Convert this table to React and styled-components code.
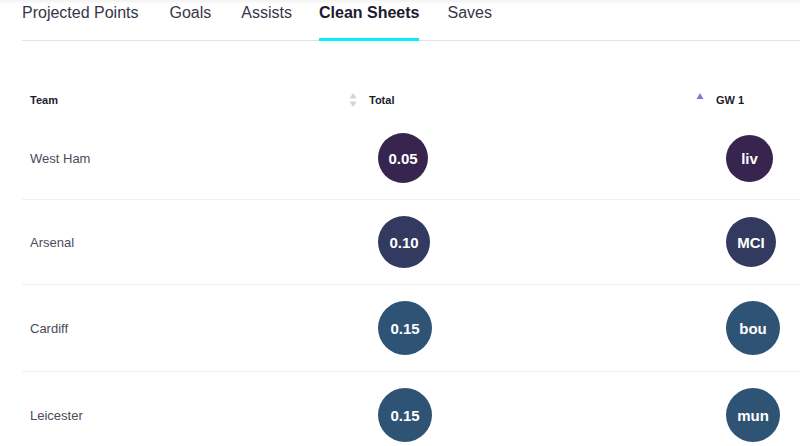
import React from "react";
import styled, { createGlobalStyle } from "styled-components";

const Global = createGlobalStyle`
  html, body { margin: 0; padding: 0; background: #fff; }
  body { font-family: "Liberation Sans", Arial, sans-serif; overflow: hidden; }
`;

const Page = styled.div`
  width: 800px;
  height: 446px;
  overflow: hidden;
  position: relative;
  background: linear-gradient(#f2f2f2 0px, #fff 4px);
`;

const TabBar = styled.nav`
  display: flex;
  margin-left: 22px;
  border-bottom: 1px solid #e2e2e2;
  height: 40px;
`;

const Tab = styled.div`
  font-size: 16px;
  line-height: 19px;
  padding-top: 3px;
  margin-right: ${(p) => p.$gap || 0}px;
  box-sizing: border-box;
  color: ${(p) => (p.$active ? "#1c1b30" : "#363648")};
  font-weight: ${(p) => (p.$active ? 700 : 400)};
  border-bottom: 3px solid ${(p) => (p.$active ? "#05f0ff" : "transparent")};
  height: 41px;
  white-space: nowrap;
`;

const Table = styled.div`
  margin: 41px 0 0 22px;
  display: grid;
  grid-template-columns: 327px 347px 1fr;
`;

const HeadCell = styled.div`
  height: 35px;
  display: flex;
  align-items: center;
  padding-left: ${(p) => p.$pad || 0}px;
  padding-top: 1px;
  box-sizing: border-box;
  font-size: 11px;
  font-weight: 700;
  color: #1c1b30;
`;

const SortIcon = styled.svg`
  width: 8px;
  height: 14px;
  margin-right: ${(p) => p.$gap}px;
  flex: none;
`;

const Cell = styled.div`
  display: flex;
  align-items: center;
  padding: 16px 0 16px ${(p) => p.$pad || 0}px;
  border-bottom: ${(p) => (p.$last ? "none" : "1px solid #f0f0f0")};
  box-sizing: border-box;
`;

const TeamName = styled.span`
  font-size: 13px;
  color: #4b4b59;
`;

const Bubble = styled.div`
  width: ${(p) => p.$size}px;
  height: ${(p) => p.$size}px;
  border-radius: 50%;
  background: ${(p) => p.$bg};
  color: #fff;
  font-weight: 700;
  font-size: 15px;
  display: flex;
  align-items: center;
  justify-content: center;
  flex: none;
`;

const rows = [
  { team: "West Ham", total: "0.05", gw: "liv", bg: "#38254f", size: 50, gwSize: 47 },
  { team: "Arsenal", total: "0.10", gw: "MCI", bg: "#323a60", size: 52, gwSize: 50 },
  { team: "Cardiff", total: "0.15", gw: "bou", bg: "#2f5375", size: 54, gwSize: 54 },
  { team: "Leicester", total: "0.15", gw: "mun", bg: "#2f5375", size: 54, gwSize: 54 },
];

const tabs = [
  { label: "Projected Points", gap: 31 },
  { label: "Goals", gap: 30 },
  { label: "Assists", gap: 27 },
  { label: "Clean Sheets", gap: 28, active: true },
  { label: "Saves" },
];

export default function App() {
  return (
    <Page>
      <Global />
      <TabBar>
        {tabs.map((t) => (
          <Tab key={t.label} $gap={t.gap} $active={t.active}>
            {t.label}
          </Tab>
        ))}
      </TabBar>
      <Table>
        <HeadCell $pad={8}>Team</HeadCell>
        <HeadCell>
          <SortIcon $gap={12} viewBox="0 0 8 14">
            <path d="M4 0 L7.5 5.5 L0.5 5.5 Z" fill="#d4d4d8" />
            <path d="M4 14 L7.5 8.5 L0.5 8.5 Z" fill="#d4d4d8" />
          </SortIcon>
          Total
        </HeadCell>
        <HeadCell>
          <SortIcon $gap={12} viewBox="0 0 8 14">
            <path d="M4 0 L7.5 6 L0.5 6 Z" fill="#7c7ad8" />
          </SortIcon>
          GW 1
        </HeadCell>
        {rows.map((r, i) => {
          const last = i === rows.length - 1;
          return (
            <React.Fragment key={r.team}>
              <Cell $pad={8} $last={last}>
                <TeamName>{r.team}</TeamName>
              </Cell>
              <Cell $pad={29} $last={last}>
                <Bubble $size={r.size} $bg={r.bg}>{r.total}</Bubble>
              </Cell>
              <Cell $pad={30} $last={last}>
                <Bubble $size={r.gwSize} $bg={r.bg}>{r.gw}</Bubble>
              </Cell>
            </React.Fragment>
          );
        })}
      </Table>
    </Page>
  );
}
